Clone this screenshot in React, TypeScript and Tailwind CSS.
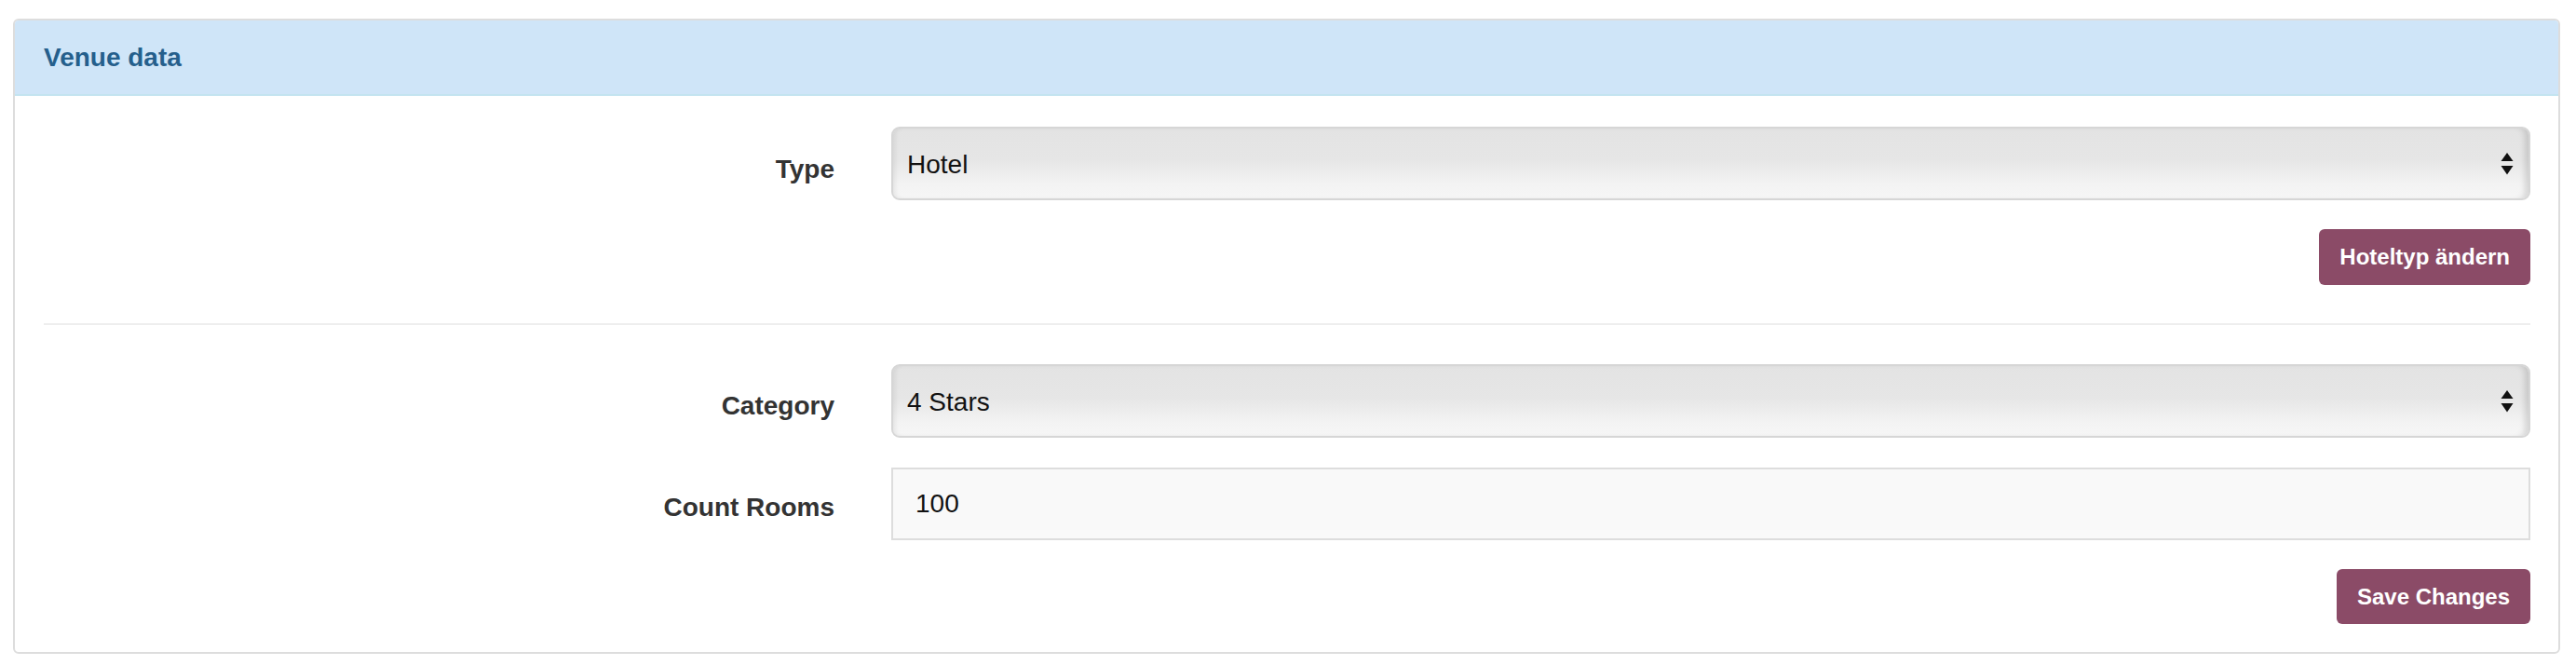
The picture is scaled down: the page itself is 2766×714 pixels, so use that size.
import React from "react";

function SelectBox({ value }: { value: string }) {
  return (
    <div className="relative flex h-[79px] flex-1 items-center rounded-[9px] border-2 border-[#d6d6d6] bg-[linear-gradient(to_bottom,#e3e3e3_0%,#e6e6e6_45%,#f3f3f3_80%,#f6f6f6_100%)] pl-[15px] shadow-[inset_5px_0_5px_-3px_rgba(0,0,0,0.07),inset_-7px_0_6px_-3px_rgba(0,0,0,0.13)]">
      <span className="pt-[3px] text-[28px] leading-[40px] text-[#111111]">{value}</span>
      <svg
        className="absolute right-[16px] top-1/2 -translate-y-1/2"
        width="14"
        height="26"
        viewBox="0 0 14 26"
      >
        <polygon points="7,1 13.5,10 0.5,10" fill="#111111" />
        <polygon points="0.5,15 13.5,15 7,24.5" fill="#111111" />
      </svg>
    </div>
  );
}

function Label({ text, pt }: { text: string; pt: string }) {
  return (
    <div className={`w-[849px] shrink-0 ${pt} text-right text-[28px] font-bold leading-[40px] text-[#333333]`}>
      {text}
    </div>
  );
}

function Btn({ text, h }: { text: string; h: string }) {
  return (
    <div className="flex justify-end">
      <button
        className={`${h} rounded-[6px] bg-[#8b4b67] px-[22px] text-[24px] font-bold leading-none text-white`}
      >
        {text}
      </button>
    </div>
  );
}

export default function App() {
  return (
    <div
      className="min-h-[714px] w-[2766px] bg-white pl-[14px] pr-[17px] pt-[20px]"
      style={{ fontFamily: '"Liberation Sans", Arial, Helvetica, sans-serif' }}
    >
      <div className="overflow-hidden rounded-[6px] border-2 border-[#dddddd] bg-white">
        <div className="flex h-[81px] items-center border-b-2 border-[#c4e4f0] bg-[#cfe5f8] pl-[31px]">
          <h3 className="text-[28px] font-bold leading-[40px] text-[#255f8c]">Venue data</h3>
        </div>
        <div className="pl-[31px] pr-[30px] pt-[33px] pb-[30px]">
          <div className="flex items-start gap-[61px]">
            <Label text="Type" pt="pt-[26px]" />
            <SelectBox value="Hotel" />
          </div>
          <div className="mt-[31px]">
            <Btn text="Hoteltyp ändern" h="h-[60px]" />
          </div>
          <div className="mt-[41px] h-[2px] bg-[#eeeeee]" />
          <div className="mt-[42px] flex items-start gap-[61px]">
            <Label text="Category" pt="pt-[25px]" />
            <SelectBox value="4 Stars" />
          </div>
          <div className="mt-[32px] flex items-start gap-[61px]">
            <Label text="Count Rooms" pt="pt-[23px]" />
            <div className="flex h-[78px] flex-1 items-center border-2 border-[#dddddd] bg-[#f9f9f9] pl-[24px]">
              <span className="text-[28px] leading-[40px] text-[#111111]">100</span>
            </div>
          </div>
          <div className="mt-[31px]">
            <Btn text="Save Changes" h="h-[59px]" />
          </div>
        </div>
      </div>
    </div>
  );
}
